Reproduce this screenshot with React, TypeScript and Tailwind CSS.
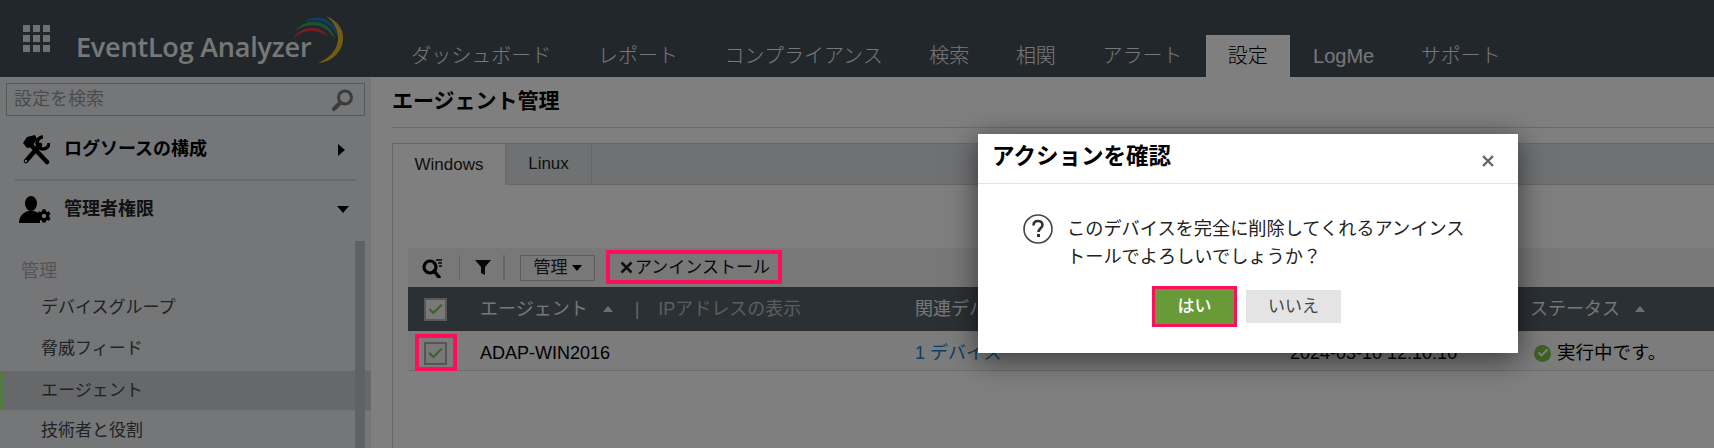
import React from 'react';
import { Check } from 'lucide-react';
import { FaCog } from 'react-icons/fa';

const font = { fontFamily: '"Liberation Sans", "Noto Sans CJK JP", sans-serif' };

const navItems = ['ダッシュボード', 'レポート', 'コンプライアンス', '検索', '相関', 'アラート', '設定', 'LogMe', 'サポート'];
const sideItems = ['デバイスグループ', '脅威フィード', 'エージェント', '技術者と役割'];

function Logo() {
  return (
    <div className="relative w-[268px] h-[77px] ml-[26px]">
      <span className="absolute left-0 top-[27px] text-[27px] leading-[40px] font-semibold text-[#eceef0] whitespace-nowrap tracking-[-0.2px]" style={{ fontFamily: '"Open Sans", sans-serif' }}>
        EventLog Analyzer
      </span>
      <svg className="absolute left-[215px] top-[14px]" width="54" height="50" viewBox="0 0 54 50">
        <path d="M2 26C6 16 16 13 24 14C31 15 35 19 38 24C33 19 27 17 21 17C13 17 7 20 2 26Z" fill="#e8384f" />
        <path d="M4 17C11 9 21 6 30 9C37 11 42 17 44 25C40 19 35 14 28 12C20 10 11 12 4 17Z" fill="#3fa25a" />
        <path d="M13 8C20 3 29 2 36 6C43 10 47 17 48 24C44 17 39 11 32 8C26 6 19 6 13 8Z" fill="#1c7fbf" />
        <path d="M35 2C46 6 53 15 52 26C51 38 41 48 27 49C37 45 46 37 47 26C48 17 43 8 35 2Z" fill="#e8b82c" />
      </svg>
    </div>
  );
}

function Header() {
  return (
    <header className="h-[77px] bg-[#444e58] flex">
      <div className="grid grid-cols-3 gap-[3px] w-[27px] h-[27px] ml-[23px] mt-[25px]">
        {Array.from({ length: 9 }).map((_, i) => (
          <span key={i} className="bg-[#dfe0e2]" />
        ))}
      </div>
      <Logo />
      <nav className="flex items-end ml-[44px] h-[77px]">
        {navItems.map((item) => (
          <a key={item} className={item === '設定' ? 'h-[42px] px-[22px] bg-white text-black text-[20px] leading-[42px] font-light' : 'h-[42px] px-[23.3px] text-[#eeeeee] text-[20px] leading-[42px] font-light'}>
            {item}
          </a>
        ))}
      </nav>
    </header>
  );
}

function ToolsIcon() {
  return (
    <svg width="28" height="30" viewBox="0 0 28 30" className="shrink-0">
      <path d="M8 9L25 27" stroke="#000" strokeWidth="4.5" strokeLinecap="round" />
      <path d="M1 8L5 2L13 0L15 4L10 12L5 13Z" fill="#000" />
      <path d="M4 26L18 10" stroke="#000" strokeWidth="4.5" strokeLinecap="round" />
      <path d="M21 2A6 6 0 1 0 27 8" fill="none" stroke="#000" strokeWidth="3.5" />
      <circle cx="4" cy="26" r="1.2" fill="#eaecf0" />
    </svg>
  );
}

function AdminIcon() {
  return (
    <div className="relative w-[32px] h-[27px] shrink-0">
      <svg width="24" height="27" viewBox="0 0 24 27" className="absolute left-0 top-0">
        <ellipse cx="12" cy="7.5" rx="6" ry="7.5" fill="#000" />
        <path d="M0 27C0 20 4 17 9 15H15C18 16 20 17 21 19V27Z" fill="#000" />
      </svg>
      <FaCog className="absolute right-0 bottom-0 text-[14px] text-black" />
    </div>
  );
}

function Sidebar() {
  return (
    <aside className="relative w-[371px] shrink-0 bg-[#eaecf0] pt-[6px]" style={font}>
      <div className="ml-[6px] w-[359px] h-[33px] border border-[#b0b0b0] bg-[#eaecf0] flex items-center pl-[7px] pr-[10px] justify-between">
        <span className="text-[18px] text-[#999]">設定を検索</span>
        <svg width="22" height="22" viewBox="0 0 22 22">
          <circle cx="13" cy="8.5" r="6.5" fill="none" stroke="#777" strokeWidth="3" />
          <path d="M8 14L2 20" stroke="#777" strokeWidth="4" strokeLinecap="round" />
        </svg>
      </div>
      <div className="mx-[15px] h-[65px] pt-[4px] border-b-[2px] border-[#d0d2d6] flex items-center pl-[7px]">
        <ToolsIcon />
        <span className="ml-[14px] text-[18px] font-bold text-black">ログソースの構成</span>
        <span className="ml-auto mr-[11px] w-0 h-0 border-y-[6px] border-y-transparent border-l-[7px] border-l-black" />
      </div>
      <div className="mx-[15px] h-[57px] flex items-center pl-[4px]">
        <AdminIcon />
        <span className="ml-[13px] text-[18px] font-bold text-[#222]">管理者権限</span>
        <span className="ml-auto mr-[7px] w-0 h-0 border-x-[6px] border-x-transparent border-t-[7px] border-t-black" />
      </div>
      <div className="ml-[21px] mt-[19px] h-[28px] leading-[28px] text-[18px] text-[#aaaaaa]">管理</div>
      <ul className="mt-[2px]">
        {sideItems.map((item) => (
          <li
            key={item}
            className={
              item === 'エージェント'
                ? 'mt-[2px] h-[39px] pl-[37px] flex items-center text-[17px] text-[#444] bg-[#cdd0d4] border-l-[4px] border-[#a4f47c]'
                : 'h-[41px] pl-[41px] flex items-center text-[17px] text-[#444]'
            }
          >
            {item}
          </li>
        ))}
      </ul>
      <div className="absolute left-[355px] top-[164px] bottom-0 w-[10px] bg-[#bec2c4]" />
    </aside>
  );
}

function CheckBox({ head }: { head?: boolean }) {
  return (
    <span className={'w-[23px] h-[23px] flex items-center justify-center border-2 ' + (head ? 'bg-[#f2f2f2] border-[#b0b0b0]' : 'bg-[#f0f0f0] border-[#aaaaaa]')}>
      <Check className="w-[17px] h-[17px] text-[#7cc24a]" strokeWidth={3} />
    </span>
  );
}

function Toolbar() {
  return (
    <div className="h-[39px] bg-[#f0f0f0] flex items-center">
      <svg width="22" height="20" viewBox="0 0 22 20" className="ml-[14px]">
        <circle cx="8" cy="9" r="6" fill="none" stroke="#000" strokeWidth="3.2" />
        <path d="M12 13L17 19" stroke="#000" strokeWidth="3.5" strokeLinecap="round" />
        <path d="M14 2H20M16 5H20M17 8H20" stroke="#000" strokeWidth="1.4" />
      </svg>
      <span className="ml-[15px] w-px h-[25px] bg-[#c8c8c8]" />
      <svg width="16" height="17" viewBox="0 0 16 17" className="ml-[15px]">
        <path d="M0 1H16L10 8V16L6 14V8Z" fill="#111" />
      </svg>
      <span className="ml-[12px] w-[2px] h-[25px] bg-[#c8c8c8]" />
      <div className="ml-[15px] w-[75px] h-[26px] border border-[#bbbbbb] flex items-center justify-center gap-[4px]">
        <span className="text-[17px] text-[#222]">管理</span>
        <span className="w-0 h-0 border-x-[5px] border-x-transparent border-t-[6px] border-t-black" />
      </div>
      <div className="ml-[16px] w-[170px] h-[26px] flex items-center pl-[9px]">
        <svg width="13" height="13" viewBox="0 0 13 13" className="mr-[2px]">
          <path d="M1.5 1.5L11.5 11.5M11.5 1.5L1.5 11.5" stroke="#222" strokeWidth="2.6" />
        </svg>
        <span className="text-[17px] text-[#111] whitespace-nowrap">アンインストール</span>
      </div>
    </div>
  );
}

function AgentTable() {
  return (
    <div>
      <div className="h-[44px] bg-[#566068] flex items-center text-[18px] text-[#eeeeee]">
        <div className="w-[72px] pl-[16px] flex"><CheckBox head /></div>
        <div className="w-[435px] flex items-center">
          <span>エージェント</span>
          <span className="ml-[15px] w-0 h-0 border-x-[5px] border-x-transparent border-b-[6px] border-b-[#dddddd]" />
          <span className="ml-[22px] text-[#cccccc]">|</span>
          <span className="ml-[19px] text-[#b8bcc0]">IPアドレスの表示</span>
        </div>
        <div className="w-[615px]">関連デバイス</div>
        <div className="flex items-center">
          <span>ステータス</span>
          <span className="ml-[15px] w-0 h-0 border-x-[5px] border-x-transparent border-b-[6px] border-b-[#dddddd]" />
        </div>
      </div>
      <div className="h-[40px] pt-[5px] bg-[#f8f8f8] border-b border-[#d8d8d8] flex items-center text-[18px] text-black">
        <div className="w-[72px] pl-[16px] flex"><CheckBox /></div>
        <div className="w-[435px]">ADAP-WIN2016</div>
        <div className="w-[375px] text-[#1a7ebd]">1 デバイス</div>
        <div className="w-[240px]">2024-03-10 12:10:10</div>
        <div className="flex items-center">
          <span className="ml-[4px] w-[17px] h-[17px] rounded-full bg-[#7cc24a] flex items-center justify-center">
            <Check className="w-[12px] h-[12px] text-white" strokeWidth={4} />
          </span>
          <span className="ml-[6px] text-[18.5px]">実行中です。</span>
        </div>
      </div>
    </div>
  );
}

function Main() {
  return (
    <main className="flex-1 bg-white pl-[21px]" style={font}>
      <div className="h-[51px] border-b border-[#d4d4d4] flex items-center pb-[2px]">
        <h1 className="text-[21px] font-bold text-black">エージェント管理</h1>
      </div>
      <div className="mt-[15px] h-[305px] border-l border-t border-[#d0d0d0]">
        <div className="h-[41px] bg-[#e0e2e6] border-b border-[#d0d0d0] flex">
          <div className="w-[113px] h-[41px] bg-white border-r border-[#d0d0d0] flex items-center justify-center text-[17px] text-[#222]">Windows</div>
          <div className="w-[86px] h-[40px] border-r border-[#d0d0d0] flex items-center justify-center text-[17px] text-[#222]">Linux</div>
        </div>
        <div className="pl-[15px] pt-[63px]">
          <Toolbar />
          <AgentTable />
        </div>
      </div>
    </main>
  );
}

function ConfirmDialog() {
  return (
    <div className="absolute left-[978px] top-[134px] w-[540px] h-[219px] bg-white shadow-[0_6px_28px_rgba(0,0,0,0.55)]" style={font}>
      <div className="h-[50px] pb-[4px] border-b border-[#e2e2e2] flex items-center justify-between pl-[14px] pr-[24px]">
        <h2 className="text-[22.5px] font-bold text-black">アクションを確認</h2>
        <svg width="12" height="12" viewBox="0 0 12 12" className="mt-[8px]">
          <path d="M1 1L11 11M11 1L1 11" stroke="#666" strokeWidth="2.4" />
        </svg>
      </div>
      <div className="pl-[45px] pt-[30px] flex">
        <svg width="30" height="30" viewBox="0 0 30 30" className="shrink-0">
          <circle cx="15" cy="15" r="14" fill="none" stroke="#444" strokeWidth="1.6" />
          <path d="M10.5 11.5C10.5 8.5 12.5 7 15 7C17.5 7 19.5 8.5 19.5 11C19.5 14 15.5 14.5 15.5 18" fill="none" stroke="#333" strokeWidth="2.6" />
          <rect x="14" y="20" width="3" height="3" fill="#333" />
        </svg>
        <p className="ml-[14px] w-[402px] mt-[1px] text-[18.2px] leading-[28px] text-[#222]">
          このデバイスを完全に削除してくれるアンインストールでよろしいでしょうか？
        </p>
      </div>
      <div className="mt-[15px] ml-[174px] flex items-center">
        <button className="w-[85px] h-[41px] border-[3px] border-[#ff0f5a] bg-[#689a3a] text-white text-[17px] font-medium">はい</button>
        <button className="ml-[9px] w-[95px] h-[33px] bg-[#e4e4e4] text-[#444] text-[17px]">いいえ</button>
      </div>
    </div>
  );
}

export default function App() {
  return (
    <div className="relative w-[1714px] h-[448px] overflow-hidden" style={font}>
      <Header />
      <div className="flex h-[371px] overflow-hidden">
        <Sidebar />
        <Main />
      </div>
      <div className="absolute inset-0 bg-black/50" />
      <div className="absolute left-[606px] top-[250px] w-[176px] h-[34px] border-[4px] border-[#ff0f5a]" />
      <div className="absolute left-[415px] top-[334px] w-[42px] h-[37px] border-[4px] border-[#ff0f5a]" />
      <ConfirmDialog />
    </div>
  );
}
